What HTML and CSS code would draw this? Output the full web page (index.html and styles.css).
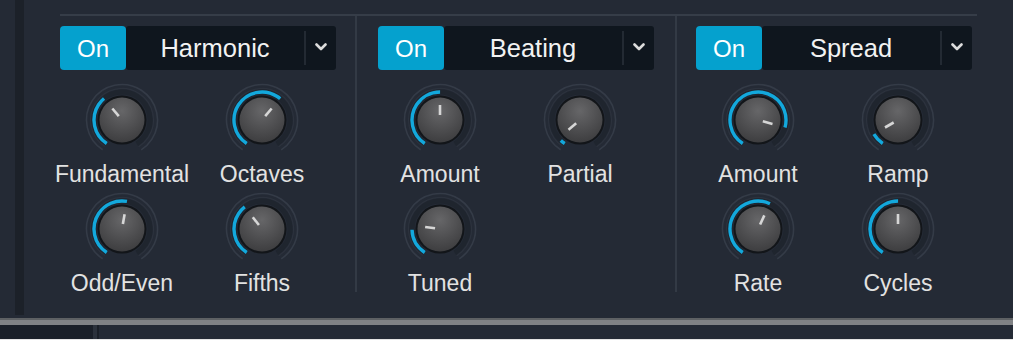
FILE: index.html
```html
<!DOCTYPE html>
<html>
<head>
<meta charset="utf-8">
<link rel="stylesheet" href="styles.css">
</head>
<body>
<svg class="defs" width="0" height="0">
  <defs>
    <radialGradient id="kg" cx="50%" cy="30%" r="75%">
      <stop offset="0" stop-color="#666668"/>
      <stop offset="0.6" stop-color="#4c4c4e"/>
      <stop offset="1" stop-color="#3b3b3d"/>
    </radialGradient>
  </defs>
</svg>
<div class="panel">
  <div class="edge"></div>
  <div class="strip"></div>
  <div class="content">
    <div class="topline"></div>
    <div class="sections">
      <section class="section s1">
        <div class="hdr">
          <div class="on">On</div>
          <div class="dd">
            <div class="dd-label">Harmonic</div>
            <div class="dd-sep"></div>
            <div class="dd-btn"><svg width="12" height="8" viewBox="0 0 12 8"><polyline class="chev" points="1.5,1.5 6,6 10.5,1.5"/></svg></div>
          </div>
        </div>
        <div class="knobs">
          <div class="cell">
            <svg class="knob" viewBox="0 0 80 80" width="80" height="80">
              <circle class="ring" cx="40" cy="40" r="35.5" stroke-dasharray="182 300" transform="rotate(123 40 40)"/>
              <circle class="ring2" cx="40" cy="40" r="31.5" stroke-dasharray="162 300" transform="rotate(123 40 40)"/>
              <circle class="track" cx="40" cy="40" r="28" stroke-dasharray="144 300" transform="rotate(123 40 40)"/>
              <circle class="arc" cx="40" cy="40" r="28" stroke-dasharray="52.3 300" transform="rotate(123 40 40)"/>
              <circle class="rim" cx="40" cy="40" r="24.5"/>
              <circle class="body" cx="40" cy="40" r="22.5"/>
              <line class="ptr" x1="40" y1="35" x2="40" y2="25" transform="rotate(-40 40 40)"/>
            </svg>
            <div class="label">Fundamental</div>
          </div>
          <div class="cell">
            <svg class="knob" viewBox="0 0 80 80" width="80" height="80">
              <circle class="ring" cx="40" cy="40" r="35.5" stroke-dasharray="182 300" transform="rotate(123 40 40)"/>
              <circle class="ring2" cx="40" cy="40" r="31.5" stroke-dasharray="162 300" transform="rotate(123 40 40)"/>
              <circle class="track" cx="40" cy="40" r="28" stroke-dasharray="144 300" transform="rotate(123 40 40)"/>
              <circle class="arc" cx="40" cy="40" r="28" stroke-dasharray="91.5 300" transform="rotate(123 40 40)"/>
              <circle class="rim" cx="40" cy="40" r="24.5"/>
              <circle class="body" cx="40" cy="40" r="22.5"/>
              <line class="ptr" x1="40" y1="35" x2="40" y2="25" transform="rotate(40 40 40)"/>
            </svg>
            <div class="label">Octaves</div>
          </div>
          <div class="cell">
            <svg class="knob" viewBox="0 0 80 80" width="80" height="80">
              <circle class="ring" cx="40" cy="40" r="35.5" stroke-dasharray="182 300" transform="rotate(123 40 40)"/>
              <circle class="ring2" cx="40" cy="40" r="31.5" stroke-dasharray="162 300" transform="rotate(123 40 40)"/>
              <circle class="track" cx="40" cy="40" r="28" stroke-dasharray="144 300" transform="rotate(123 40 40)"/>
              <circle class="arc" cx="40" cy="40" r="28" stroke-dasharray="76.7 300" transform="rotate(123 40 40)"/>
              <circle class="rim" cx="40" cy="40" r="24.5"/>
              <circle class="body" cx="40" cy="40" r="22.5"/>
              <line class="ptr" x1="40" y1="35" x2="40" y2="25" transform="rotate(10 40 40)"/>
            </svg>
            <div class="label">Odd/Even</div>
          </div>
          <div class="cell">
            <svg class="knob" viewBox="0 0 80 80" width="80" height="80">
              <circle class="ring" cx="40" cy="40" r="35.5" stroke-dasharray="182 300" transform="rotate(123 40 40)"/>
              <circle class="ring2" cx="40" cy="40" r="31.5" stroke-dasharray="162 300" transform="rotate(123 40 40)"/>
              <circle class="track" cx="40" cy="40" r="28" stroke-dasharray="144 300" transform="rotate(123 40 40)"/>
              <circle class="arc" cx="40" cy="40" r="28" stroke-dasharray="53.2 300" transform="rotate(123 40 40)"/>
              <circle class="rim" cx="40" cy="40" r="24.5"/>
              <circle class="body" cx="40" cy="40" r="22.5"/>
              <line class="ptr" x1="40" y1="35" x2="40" y2="25" transform="rotate(-38 40 40)"/>
            </svg>
            <div class="label">Fifths</div>
          </div>
        </div>
      </section>
      <div class="divider"></div>
      <section class="section s2">
        <div class="hdr">
          <div class="on">On</div>
          <div class="dd">
            <div class="dd-label">Beating</div>
            <div class="dd-sep"></div>
            <div class="dd-btn"><svg width="12" height="8" viewBox="0 0 12 8"><polyline class="chev" points="1.5,1.5 6,6 10.5,1.5"/></svg></div>
          </div>
        </div>
        <div class="knobs">
          <div class="cell">
            <svg class="knob" viewBox="0 0 80 80" width="80" height="80">
              <circle class="ring" cx="40" cy="40" r="35.5" stroke-dasharray="182 300" transform="rotate(123 40 40)"/>
              <circle class="ring2" cx="40" cy="40" r="31.5" stroke-dasharray="162 300" transform="rotate(123 40 40)"/>
              <circle class="track" cx="40" cy="40" r="28" stroke-dasharray="144 300" transform="rotate(123 40 40)"/>
              <circle class="arc" cx="40" cy="40" r="28" stroke-dasharray="71.8 300" transform="rotate(123 40 40)"/>
              <circle class="rim" cx="40" cy="40" r="24.5"/>
              <circle class="body" cx="40" cy="40" r="22.5"/>
              <line class="ptr" x1="40" y1="35" x2="40" y2="25" transform="rotate(0 40 40)"/>
            </svg>
            <div class="label">Amount</div>
          </div>
          <div class="cell">
            <svg class="knob" viewBox="0 0 80 80" width="80" height="80">
              <circle class="ring" cx="40" cy="40" r="35.5" stroke-dasharray="182 300" transform="rotate(123 40 40)"/>
              <circle class="ring2" cx="40" cy="40" r="31.5" stroke-dasharray="162 300" transform="rotate(123 40 40)"/>
              <circle class="track" cx="40" cy="40" r="28" stroke-dasharray="144 300" transform="rotate(123 40 40)"/>
              <circle class="arc" cx="40" cy="40" r="28" stroke-dasharray="5 300" transform="rotate(123 40 40)"/>
              <circle class="rim" cx="40" cy="40" r="24.5"/>
              <circle class="body" cx="40" cy="40" r="22.5"/>
              <line class="ptr" x1="40" y1="35" x2="40" y2="25" transform="rotate(-130 40 40)"/>
            </svg>
            <div class="label">Partial</div>
          </div>
          <div class="cell">
            <svg class="knob" viewBox="0 0 80 80" width="80" height="80">
              <circle class="ring" cx="40" cy="40" r="35.5" stroke-dasharray="182 300" transform="rotate(123 40 40)"/>
              <circle class="ring2" cx="40" cy="40" r="31.5" stroke-dasharray="162 300" transform="rotate(123 40 40)"/>
              <circle class="track" cx="40" cy="40" r="28" stroke-dasharray="144 300" transform="rotate(123 40 40)"/>
              <circle class="arc" cx="40" cy="40" r="28" stroke-dasharray="27 300" transform="rotate(123 40 40)"/>
              <circle class="rim" cx="40" cy="40" r="24.5"/>
              <circle class="body" cx="40" cy="40" r="22.5"/>
              <line class="ptr" x1="40" y1="35" x2="40" y2="25" transform="rotate(-82 40 40)"/>
            </svg>
            <div class="label">Tuned</div>
          </div>
        </div>
      </section>
      <div class="divider"></div>
      <section class="section s3">
        <div class="hdr">
          <div class="on">On</div>
          <div class="dd">
            <div class="dd-label">Spread</div>
            <div class="dd-sep"></div>
            <div class="dd-btn"><svg width="12" height="8" viewBox="0 0 12 8"><polyline class="chev" points="1.5,1.5 6,6 10.5,1.5"/></svg></div>
          </div>
        </div>
        <div class="knobs">
          <div class="cell">
            <svg class="knob" viewBox="0 0 80 80" width="80" height="80">
              <circle class="ring" cx="40" cy="40" r="35.5" stroke-dasharray="182 300" transform="rotate(123 40 40)"/>
              <circle class="ring2" cx="40" cy="40" r="31.5" stroke-dasharray="162 300" transform="rotate(123 40 40)"/>
              <circle class="track" cx="40" cy="40" r="28" stroke-dasharray="144 300" transform="rotate(123 40 40)"/>
              <circle class="arc" cx="40" cy="40" r="28" stroke-dasharray="123.2 300" transform="rotate(123 40 40)"/>
              <circle class="rim" cx="40" cy="40" r="24.5"/>
              <circle class="body" cx="40" cy="40" r="22.5"/>
              <line class="ptr" x1="40" y1="35" x2="40" y2="25" transform="rotate(105 40 40)"/>
            </svg>
            <div class="label">Amount</div>
          </div>
          <div class="cell">
            <svg class="knob" viewBox="0 0 80 80" width="80" height="80">
              <circle class="ring" cx="40" cy="40" r="35.5" stroke-dasharray="182 300" transform="rotate(123 40 40)"/>
              <circle class="ring2" cx="40" cy="40" r="31.5" stroke-dasharray="162 300" transform="rotate(123 40 40)"/>
              <circle class="track" cx="40" cy="40" r="28" stroke-dasharray="144 300" transform="rotate(123 40 40)"/>
              <circle class="arc" cx="40" cy="40" r="28" stroke-dasharray="13 300" transform="rotate(123 40 40)"/>
              <circle class="rim" cx="40" cy="40" r="24.5"/>
              <circle class="body" cx="40" cy="40" r="22.5"/>
              <line class="ptr" x1="40" y1="35" x2="40" y2="25" transform="rotate(-120 40 40)"/>
            </svg>
            <div class="label">Ramp</div>
          </div>
          <div class="cell">
            <svg class="knob" viewBox="0 0 80 80" width="80" height="80">
              <circle class="ring" cx="40" cy="40" r="35.5" stroke-dasharray="182 300" transform="rotate(123 40 40)"/>
              <circle class="ring2" cx="40" cy="40" r="31.5" stroke-dasharray="162 300" transform="rotate(123 40 40)"/>
              <circle class="track" cx="40" cy="40" r="28" stroke-dasharray="144 300" transform="rotate(123 40 40)"/>
              <circle class="arc" cx="40" cy="40" r="28" stroke-dasharray="84 300" transform="rotate(123 40 40)"/>
              <circle class="rim" cx="40" cy="40" r="24.5"/>
              <circle class="body" cx="40" cy="40" r="22.5"/>
              <line class="ptr" x1="40" y1="35" x2="40" y2="25" transform="rotate(25 40 40)"/>
            </svg>
            <div class="label">Rate</div>
          </div>
          <div class="cell">
            <svg class="knob" viewBox="0 0 80 80" width="80" height="80">
              <circle class="ring" cx="40" cy="40" r="35.5" stroke-dasharray="182 300" transform="rotate(123 40 40)"/>
              <circle class="ring2" cx="40" cy="40" r="31.5" stroke-dasharray="162 300" transform="rotate(123 40 40)"/>
              <circle class="track" cx="40" cy="40" r="28" stroke-dasharray="144 300" transform="rotate(123 40 40)"/>
              <circle class="arc" cx="40" cy="40" r="28" stroke-dasharray="71.8 300" transform="rotate(123 40 40)"/>
              <circle class="rim" cx="40" cy="40" r="24.5"/>
              <circle class="body" cx="40" cy="40" r="22.5"/>
              <line class="ptr" x1="40" y1="35" x2="40" y2="25" transform="rotate(0 40 40)"/>
            </svg>
            <div class="label">Cycles</div>
          </div>
        </div>
      </section>
    </div>
  </div>
</div>
<div class="rail"></div>
<div class="foot">
  <div class="foot-left"></div>
  <div class="foot-sep"></div>
  <div class="foot-line"></div>
</div>
<div class="edge-line"></div>
</body>
</html>
```

FILE: styles.css
```css
html, body {
  margin: 0;
  padding: 0;
}
body {
  width: 1013px;
  height: 340px;
  overflow: hidden;
  background: #242a35;
  font-family: "Liberation Sans", Arial, sans-serif;
  color: #e4e4e4;
}
.defs {
  position: absolute;
  width: 0;
  height: 0;
}
.panel {
  display: flex;
  height: 318px;
}
.edge {
  width: 15px;
  flex: none;
}
.strip {
  width: 9px;
  height: 315px;
  flex: none;
  background: #1c2129;
}
.content {
  margin-left: 36px;
  display: flex;
  flex-direction: column;
}
.topline {
  margin-top: 14px;
  width: 917px;
  height: 2px;
  background: #363d48;
}
.sections {
  display: flex;
}
.section {
  box-sizing: border-box;
  display: flex;
  flex-direction: column;
  height: 276px;
  padding-top: 10px;
  flex: none;
}
.s1 { width: 295px; }
.s2 { width: 318px; padding-left: 21px; }
.s3 { width: 299px; padding-left: 19px; }
.divider {
  width: 2px;
  height: 276px;
  flex: none;
  background: #333a45;
}
.hdr {
  display: flex;
  width: 276px;
  height: 44px;
}
.on {
  width: 66px;
  flex: none;
  background: #05a1ce;
  border-radius: 4px;
  color: #ffffff;
  font-size: 24px;
  line-height: 46px;
  text-align: center;
}
.dd {
  flex: 1;
  display: flex;
  align-items: center;
  background: #0f161e;
  border-radius: 3px;
}
.dd-label {
  flex: 1;
  text-align: center;
  font-size: 25.5px;
  line-height: 46px;
  color: #f2f2f2;
}
.dd-sep {
  width: 2px;
  height: 34px;
  background: #232a33;
}
.dd-btn {
  width: 30px;
  display: flex;
  align-items: center;
  justify-content: center;
  padding-bottom: 2px;
}
.chev {
  fill: none;
  stroke: #dcdcdc;
  stroke-width: 2.6;
  stroke-linecap: round;
  stroke-linejoin: round;
}
.knobs {
  display: grid;
  grid-template-columns: 120px 120px;
  column-gap: 20px;
  row-gap: 2px;
  margin-top: 10px;
  padding-left: 2px;
}
.cell {
  display: flex;
  flex-direction: column;
  align-items: center;
  width: 120px;
}
.knob {
  display: block;
}
.ring {
  fill: none;
  stroke: #343b47;
  stroke-width: 1.6;
}
.ring2 {
  fill: none;
  stroke: #2c323d;
  stroke-width: 1.2;
}
.track {
  fill: none;
  stroke: #1f252e;
  stroke-width: 5;
}
.arc {
  fill: none;
  stroke: #13a8dc;
  stroke-width: 3.4;
}
.rim {
  fill: #121519;
}
.body {
  fill: url(#kg);
}
.ptr {
  stroke: #d6d6d6;
  stroke-width: 2.6;
}
.label {
  font-size: 23px;
  line-height: 26px;
  margin-top: 1px;
  white-space: nowrap;
  color: #e2e2e2;
}
.rail {
  height: 7px;
  background: linear-gradient(#5e6164 0, #5e6164 2px, #808285 2px, #808285 100%);
}
.foot {
  display: flex;
  height: 14px;
}
.foot-left {
  width: 93px;
  background: #1a1f28;
}
.foot-sep {
  width: 4px;
  background: #2b313b;
}
.foot-line {
  width: 2px;
  background: #1a1f27;
}
.edge-line {
  height: 1px;
  background: #e4e4e4;
}
```
